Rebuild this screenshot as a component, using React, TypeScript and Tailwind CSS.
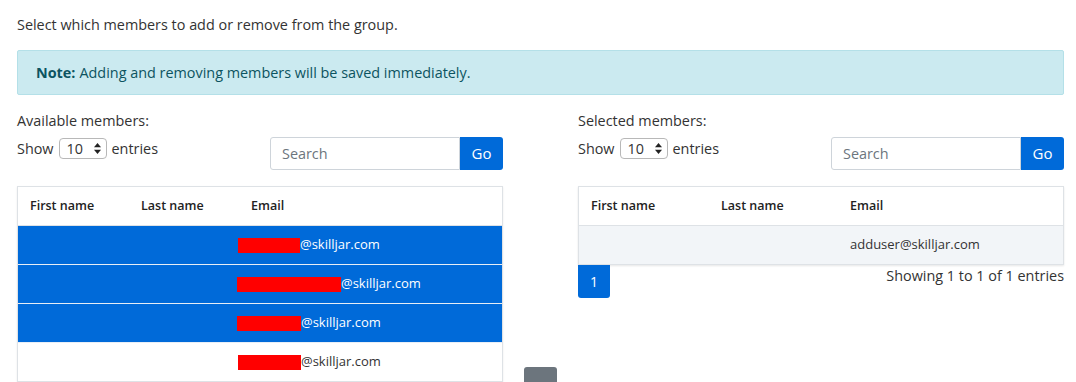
import { ChevronRight } from "lucide-react";

type Row = { redact: number; shift: number; domain: string };

const AVAILABLE: (Row & { selected: boolean })[] = [
  { redact: 62, shift: 13, domain: "@skilljar.com", selected: true },
  { redact: 104, shift: 14, domain: "@skilljar.com", selected: true },
  { redact: 64, shift: 14, domain: "@skilljar.com", selected: true },
  { redact: 63, shift: 13, domain: "@skilljar.com", selected: false },
];

function Toolbar() {
  return (
    <div className="flex items-start justify-between">
      <div className="flex items-center gap-[5px] pt-[1px] text-[14.4px] leading-5 text-[#333]">
        <span>Show</span>
        <div className="flex h-[21px] w-[48px] items-center justify-between rounded-[4px] border border-[#b8b8b8] pl-[7px] pr-[5px] text-[14.4px]">
          <span>10</span>
          <svg width="7" height="11" viewBox="0 0 7 11">
            <path d="M3.5 0 L7 4.2 H0 Z" fill="#222" />
            <path d="M3.5 11 L7 6.8 H0 Z" fill="#222" />
          </svg>
        </div>
        <span>entries</span>
      </div>
      <div className="flex h-[33px]">
        <div className="flex w-[190px] items-center rounded-l-[3px] border border-[#ced4da] px-[11px] text-[14.4px] text-[#6c757d]">
          Search
        </div>
        <button className="w-[43px] rounded-r-[3px] bg-[#006ad9] text-[15px] text-white">
          Go
        </button>
      </div>
    </div>
  );
}

function Header({ widths }: { widths: [number, number] }) {
  return (
    <div className="flex h-[39px] items-center border-b border-[#dee2e6] text-[12.5px] font-semibold text-[#222]">
      <div className="pl-[12px]" style={{ width: widths[0] }}>
        First name
      </div>
      <div className="pl-[12px]" style={{ width: widths[1] }}>
        Last name
      </div>
      <div className="pl-[12px]">Email</div>
    </div>
  );
}

export default function App() {
  return (
    <div
      className="h-[382px] w-[1076px] overflow-hidden bg-white pl-[17px] pr-[12px] pt-[15px] text-[#333]"
      style={{ fontFamily: '"Open Sans", "Noto Sans", sans-serif' }}
    >
      <p className="text-[14.4px] leading-5">
        Select which members to add or remove from the group.
      </p>

      <div className="mt-[15px] flex h-[45px] items-center rounded-[2px] border border-[#b4e0e8] bg-[#cbeaf0] px-[18px] pt-[1px] text-[14.4px] text-[#0c5460]">
        <span className="font-bold">Note:</span>
        <span className="ml-[4px]">Adding and removing members will be saved immediately.</span>
      </div>

      <div className="mt-[16px] flex">
        {/* available */}
        <div className="w-[486px]">
          <div className="text-[14.4px] leading-5">Available members:</div>
          <div className="mt-[6px]">
            <Toolbar />
          </div>
          <div className="mt-[16px] border border-[#dee2e6] shadow-[0_1px_2px_rgba(0,0,0,0.08)]">
            <Header widths={[111, 110]} />
            {AVAILABLE.map((r, i) => (
              <div
                key={i}
                className={
                  r.selected
                    ? "flex h-[39px] items-center border-b border-[#e8eef6] bg-[#006ad9] text-[13px] text-white"
                    : "flex h-[38px] items-center text-[13px] text-[#333]"
                }
              >
                <div className="w-[221px]" />
                <div className="flex items-center pl-[12px]">
                  <span
                    className="inline-block h-[15px] bg-[#ff0000]"
                    style={{ width: r.redact, marginLeft: -r.shift }}
                  />
                  <span>{r.domain}</span>
                </div>
              </div>
            ))}
          </div>
        </div>

        {/* middle buttons */}
        <div className="flex w-[75px] justify-center pt-[256px]">
          <button className="flex h-[33px] w-[33px] items-start justify-center rounded-[3px] bg-[#6c757d] pt-[12px] text-white">
            <ChevronRight size={16} strokeWidth={3} />
          </button>
        </div>

        {/* selected */}
        <div className="w-[486px]">
          <div className="text-[14.4px] leading-5">Selected members:</div>
          <div className="mt-[6px]">
            <Toolbar />
          </div>
          <div className="mt-[16px] border border-[#dee2e6] shadow-[0_1px_2px_rgba(0,0,0,0.1)]">
            <Header widths={[130, 129]} />
            <div className="flex h-[38px] items-center bg-[#f2f5f8] text-[13px] text-[#333]">
              <div className="w-[259px]" />
              <div className="pl-[12px]">adduser@skilljar.com</div>
            </div>
          </div>
          <div className="flex items-start justify-between">
            <button className="h-[33px] w-[32px] rounded-b-[3px] bg-[#006ad9] text-[14px] text-white">
              1
            </button>
            <div className="pt-[1px] text-[14.4px] leading-5 text-[#333]">
              Showing 1 to 1 of 1 entries
            </div>
          </div>
        </div>
      </div>
    </div>
  );
}
